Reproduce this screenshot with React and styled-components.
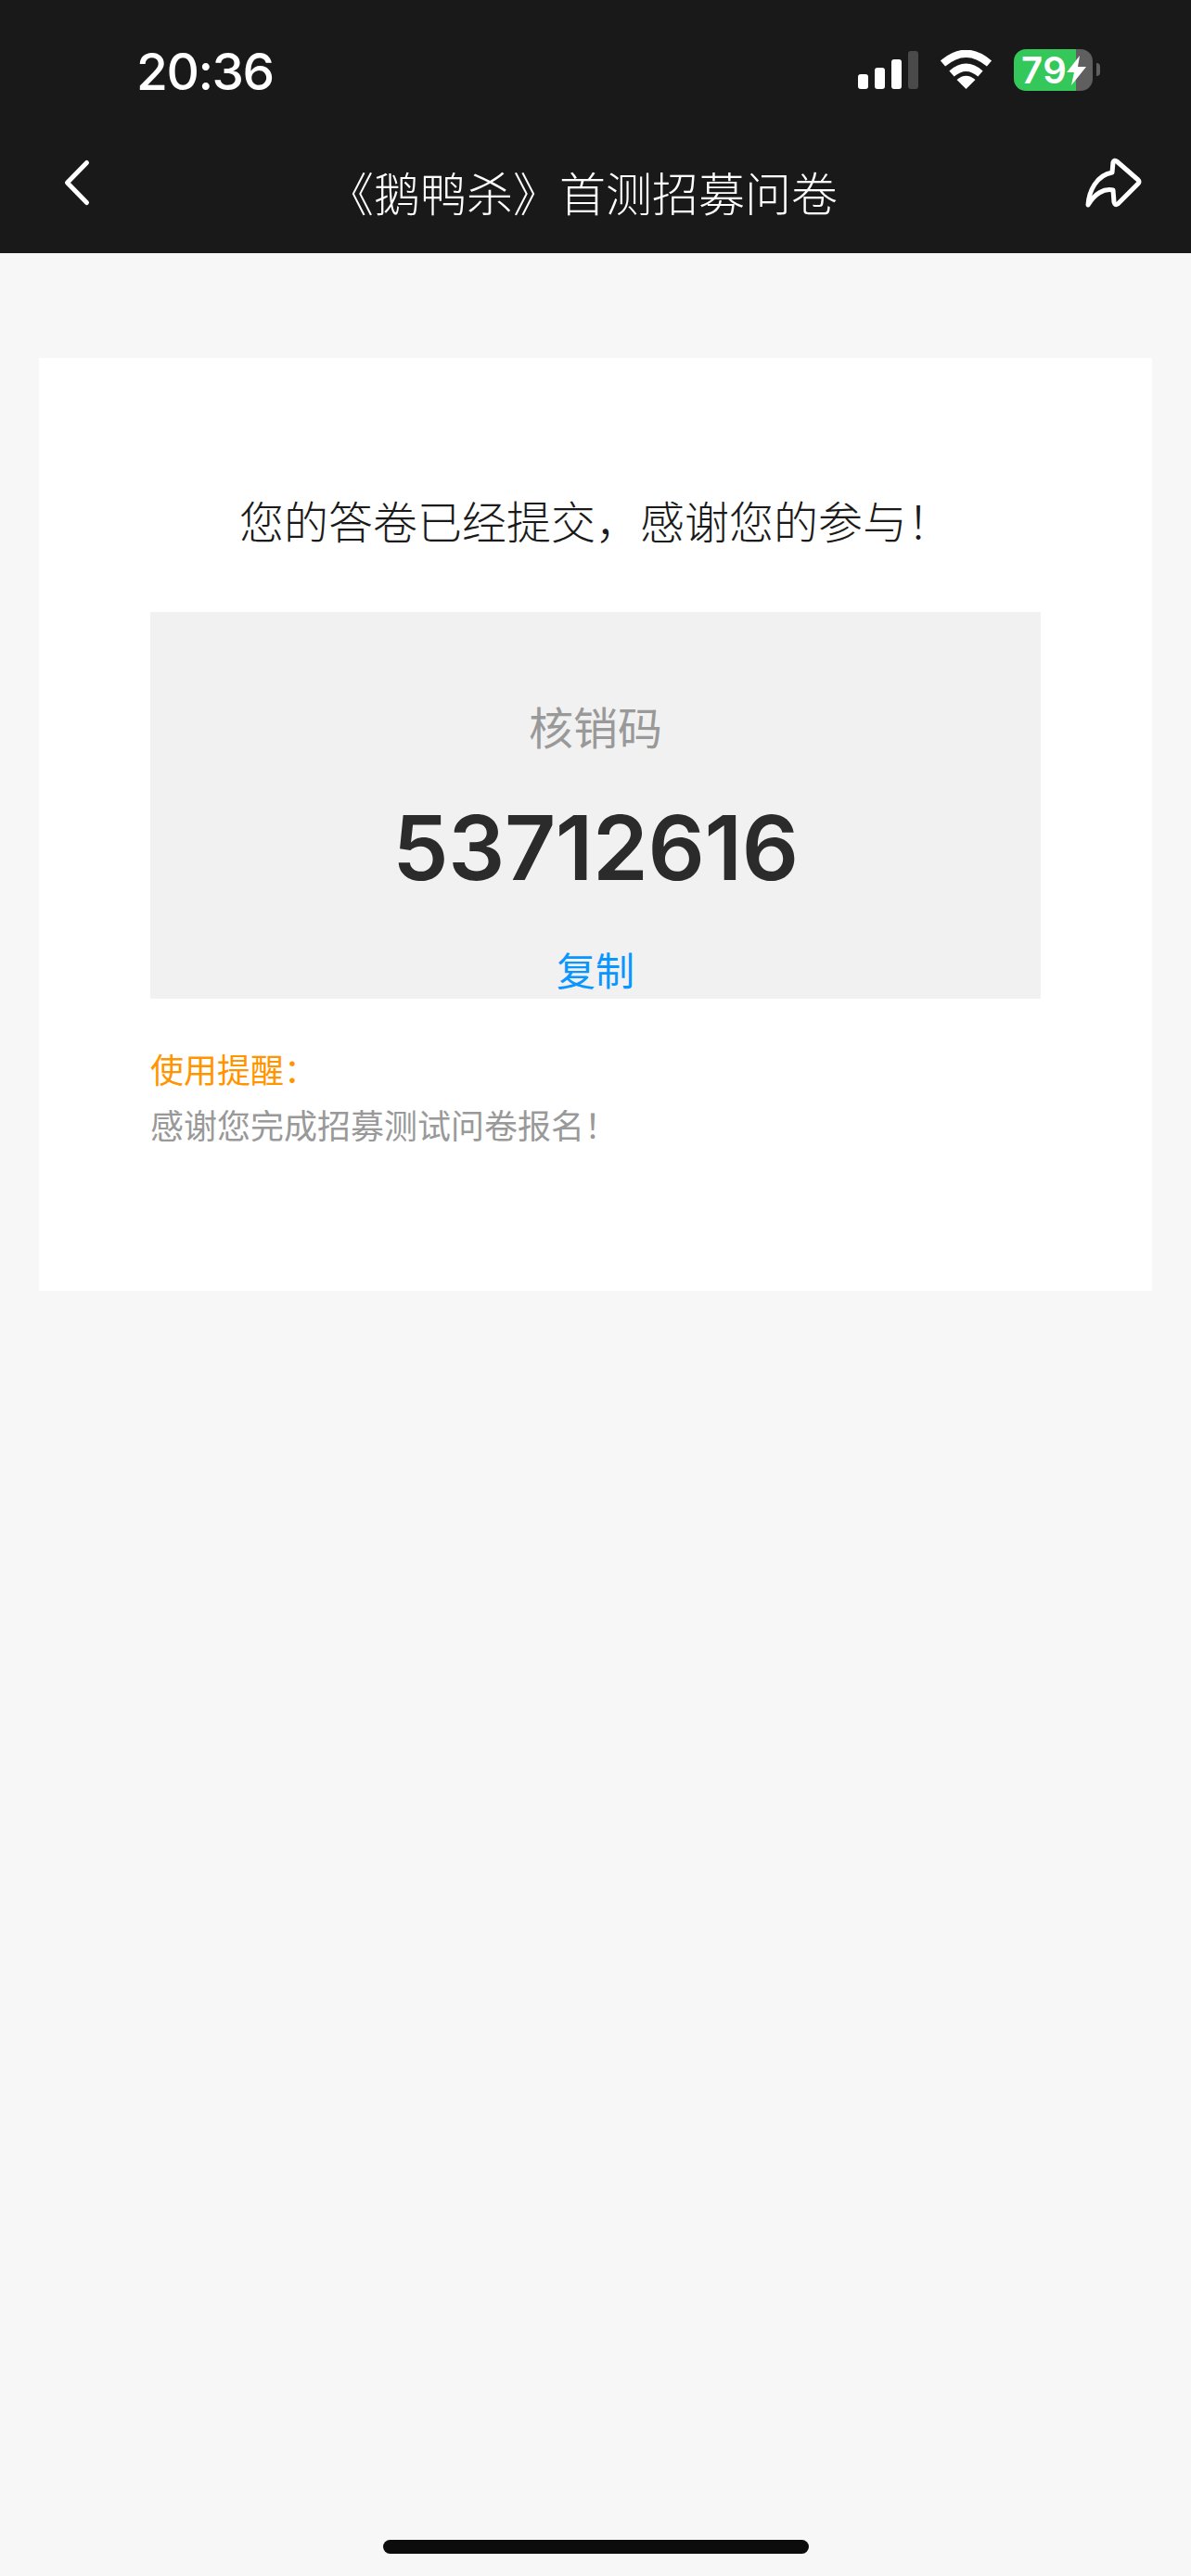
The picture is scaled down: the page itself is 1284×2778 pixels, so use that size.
import React from "react";
import styled, { createGlobalStyle } from "styled-components";

const GlobalStyle = createGlobalStyle`
  html, body {
    margin: 0;
    padding: 0;
    background: #f7f7f7;
    font-family: "Liberation Sans", "Noto Sans CJK SC", sans-serif;
  }
`;

const Page = styled.div`
  position: relative;
  width: 1284px;
  height: 2778px;
  overflow: hidden;
  background: #f7f7f7;
`;

const Header = styled.header`
  height: 273px;
  background: #191919;
  color: #fff;
`;

const StatusBar = styled.div`
  display: flex;
  align-items: flex-start;
  justify-content: space-between;
  height: 150px;
  padding: 53px 98px 0 147px;
  box-sizing: border-box;
`;

const Time = styled.div`
  font-family: "Inter", sans-serif;
  font-weight: 550;
  font-size: 55px;
  line-height: 48px;
  letter-spacing: -1.5px;
`;

const StatusIcons = styled.div`
  display: flex;
  align-items: flex-start;
`;

const Signal = styled.svg`
  display: block;
  width: 65px;
  height: 41px;
  margin-top: 2px;
`;

const Wifi = styled.svg`
  display: block;
  width: 57px;
  height: 42px;
  margin: 1px 23px 0;
`;

const Battery = styled.div`
  display: flex;
  align-items: center;
  width: 85px;
  height: 45px;
  padding-left: 8px;
  box-sizing: border-box;
  border-radius: 13px;
  background: linear-gradient(to right, #34c759 79%, #5f5f5f 79%);
  font-family: "Inter", sans-serif;
  font-weight: 600;
  font-size: 40px;
  line-height: 45px;
  letter-spacing: 0.5px;
`;

const BoltIcon = styled.svg`
  display: block;
  flex: none;
  width: 21px;
  height: 32px;
`;

const BatteryNub = styled.div`
  width: 4px;
  height: 14px;
  margin: 15px 0 0 4px;
  border-radius: 0 7px 7px 0;
  background: #5f5f5f;
`;

const NavBar = styled.div`
  display: flex;
  align-items: center;
  justify-content: space-between;
  height: 123px;
  padding: 0 54px 30px 70px;
  box-sizing: border-box;
`;

const NavIcon = styled.svg`
  display: block;
  flex: none;
  overflow: visible;
`;

const NavTitle = styled.h1`
  margin: 28px 10px 0 0;
  font-weight: 300;
  font-size: 50px;
  line-height: 60px;
  color: #fff;
  text-align: center;
`;

const Card = styled.main`
  margin: 113px 42px 0;
  padding: 149px 120px 151px;
  background: #fff;
`;

const Message = styled.p`
  margin: 0 0 65px;
  font-weight: 300;
  font-size: 48px;
  line-height: 60px;
  color: #1a1a1a;
  text-align: center;
`;

const CodeBox = styled.section`
  display: flex;
  flex-direction: column;
  align-items: center;
  padding: 97px 0 3px;
  background: #f1f1f1;
`;

const CodeLabel = styled.div`
  font-size: 48px;
  font-weight: 400;
  line-height: 60px;
  color: #999;
`;

const CodeValue = styled.div`
  margin-top: 47px;
  font-family: "Inter", sans-serif;
  font-weight: 600;
  font-size: 96px;
  line-height: 100px;
  letter-spacing: -0.4px;
  color: #2b2b2b;
`;

const CopyLink = styled.a`
  margin-top: 60px;
  font-size: 42px;
  line-height: 50px;
  color: #0a96ff;
`;

const Notice = styled.div`
  margin-top: ${(p) => p.$top}px;
  font-size: 36px;
  font-weight: 400;
  line-height: 50px;
  color: ${(p) => p.$color};
`;

const HomeBar = styled.div`
  position: absolute;
  left: 413px;
  top: 2739px;
  width: 459px;
  height: 15px;
  border-radius: 8px;
  background: #0c0c0c;
`;

export default function App() {
  return (
    <Page>
      <GlobalStyle />
      <Header>
        <StatusBar>
          <Time>20:36</Time>
          <StatusIcons>
            <Signal viewBox="0 0 65 41">
              <rect x="0" y="25" width="11" height="16" rx="3" fill="#fff" />
              <rect x="18" y="18" width="11" height="23" rx="3" fill="#fff" />
              <rect x="36" y="9" width="11" height="32" rx="3" fill="#fff" />
              <rect x="54" y="0" width="11" height="41" rx="3" fill="#4a4a4a" />
            </Signal>
            <Wifi viewBox="0 0 57 42">
              <g fill="none" stroke="#fff" strokeWidth="8">
                <path d="M3.5 14.5Q28.5 -7 53.5 14.5" />
                <path d="M13 25.5Q28.5 12 44 25.5" />
              </g>
              <path d="M28.5 42L18.5 32Q28.5 23.5 38.5 32Z" fill="#fff" />
            </Wifi>
            <Battery>
              79
              <BoltIcon viewBox="0 0 21 32">
                <path d="M14 0L0 18H8L5 32L21 12H12Z" fill="#fff" />
              </BoltIcon>
            </Battery>
            <BatteryNub />
          </StatusIcons>
        </StatusBar>
        <NavBar>
          <NavIcon width="26" height="48" viewBox="0 0 26 48">
            <path
              d="M23.5 2.5L2.5 24L23.5 45.5"
              fill="none"
              stroke="#fff"
              strokeWidth="5"
              strokeLinecap="round"
              strokeLinejoin="round"
            />
          </NavIcon>
          <NavTitle>《鹅鸭杀》首测招募问卷</NavTitle>
          <NavIcon width="60" height="52" viewBox="0 0 60 52">
            <path
              d="M3 50C4 35 12 18 29 15L30 4Q31 1 34 3L57 23Q59 25 57 27L35 49Q32 51 31 47L30 34C20 32 10 38 3 50Z"
              fill="none"
              stroke="#fff"
              strokeWidth="5"
              strokeLinejoin="round"
            />
          </NavIcon>
        </NavBar>
      </Header>
      <Card>
        <Message>您的答卷已经提交，感谢您的参与！</Message>
        <CodeBox>
          <CodeLabel>核销码</CodeLabel>
          <CodeValue>53712616</CodeValue>
          <CopyLink>复制</CopyLink>
        </CodeBox>
        <Notice $top={54} $color="#ff9500">
          使用提醒：
        </Notice>
        <Notice $top={10} $color="#999">
          感谢您完成招募测试问卷报名！
        </Notice>
      </Card>
      <HomeBar />
    </Page>
  );
}
